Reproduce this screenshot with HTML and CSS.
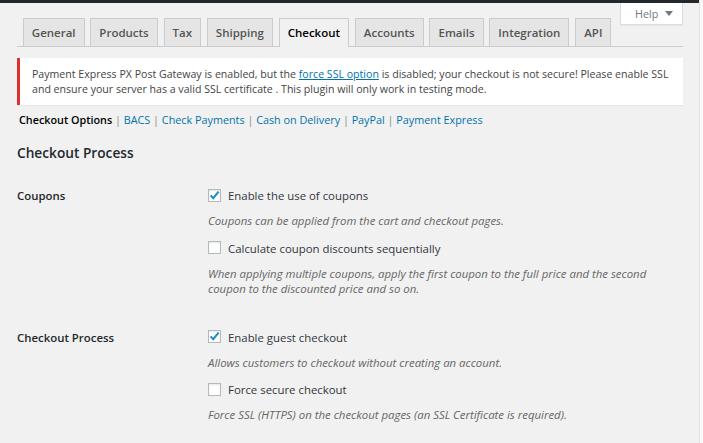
FILE: index.html
```html
<!DOCTYPE html>
<html lang="en">
<head>
<meta charset="utf-8">
<title>WooCommerce Settings - Checkout</title>
<link rel="stylesheet" href="styles.css">
</head>
<body>
<div class="page">
  <div class="main">
    <div class="adminbar"></div>
    <div class="help-tab">Help <svg class="help-arrow" width="8" height="5" viewBox="0 0 8 5"><path d="M0 0 H8 L4 5 Z" fill="#72777c"/></svg></div>
    <div class="wrap">
      <nav class="tabs">
        <a class="tab">General</a>
        <a class="tab">Products</a>
        <a class="tab">Tax</a>
        <a class="tab">Shipping</a>
        <a class="tab tab-active">Checkout</a>
        <a class="tab">Accounts</a>
        <a class="tab">Emails</a>
        <a class="tab">Integration</a>
        <a class="tab">API</a>
      </nav>
      <div class="notice">
        <p>Payment Express PX Post Gateway is enabled, but the <a class="link-u">force SSL option</a> is disabled; your checkout is not secure! Please enable SSL and ensure your server has a valid SSL certificate . This plugin will only work in testing mode.</p>
      </div>
      <ul class="subsub">
        <li><span class="current">Checkout Options</span> <span class="sep">|</span> </li>
        <li><a class="link">BACS</a> <span class="sep">|</span> </li>
        <li><a class="link">Check Payments</a> <span class="sep">|</span> </li>
        <li><a class="link">Cash on Delivery</a> <span class="sep">|</span> </li>
        <li><a class="link">PayPal</a> <span class="sep">|</span> </li>
        <li><a class="link">Payment Express</a></li>
      </ul>
      <h2 class="section-title">Checkout Process</h2>
      <div class="form-table">
        <div class="form-row">
          <div class="row-label">Coupons</div>
          <div class="row-field">
            <label class="option"><span class="cb"><svg width="13" height="13" viewBox="0 0 13 13"><path d="M2.6 6.4 L5.2 9.2 L10.6 2.6" fill="none" stroke="#1e8cbe" stroke-width="2"/></svg></span>Enable the use of coupons</label>
            <p class="desc">Coupons can be applied from the cart and checkout pages.</p>
            <label class="option"><span class="cb"></span>Calculate coupon discounts sequentially</label>
            <p class="desc">When applying multiple coupons, apply the first coupon to the full price and the second coupon to the discounted price and so on.</p>
          </div>
        </div>
        <div class="form-row">
          <div class="row-label">Checkout Process</div>
          <div class="row-field">
            <label class="option"><span class="cb"><svg width="13" height="13" viewBox="0 0 13 13"><path d="M2.6 6.4 L5.2 9.2 L10.6 2.6" fill="none" stroke="#1e8cbe" stroke-width="2"/></svg></span>Enable guest checkout</label>
            <p class="desc">Allows customers to checkout without creating an account.</p>
            <label class="option"><span class="cb"></span>Force secure checkout</label>
            <p class="desc">Force SSL (HTTPS) on the checkout pages (an SSL Certificate is required).</p>
          </div>
        </div>
      </div>
    </div>
  </div>
  <div class="gutter"></div>
</div>
</body>
</html>
```

FILE: styles.css
```css
* { box-sizing: border-box; }
html, body { margin: 0; padding: 0; }
body {
  background: #f1f1f1;
  font-family: "Open Sans", "Noto Sans", sans-serif;
  font-size: 10.6px;
  line-height: 16px;
  color: #444;
  height: 443px;
  overflow: hidden;
}
.page { display: flex; height: 443px; }
.main { width: 699px; position: relative; }
.gutter { flex: 1; background: #f8f8f8; border-left: 1px solid #e3e3e3; }
.adminbar { height: 3px; background: #23282d; }
.help-tab {
  position: absolute;
  top: 3px;
  right: 16px;
  height: 22px;
  width: 63px;
  padding: 0 0 0 14px;
  background: #fff;
  border: 1px solid #ddd;
  border-top: none;
  box-shadow: 0 1px 1px rgba(0,0,0,.04);
  color: #72777c;
  font-size: 10.8px;
  line-height: 21px;
  display: flex;
  align-items: center;
  gap: 7px;
}
.help-arrow { display: block; }
.wrap { margin: 0 16px 0 17px; }
.tabs {
  display: flex;
  padding: 15px 0 0 0;
  border-bottom: 1px solid #ccc;
}
.tab {
  margin-left: 5.8px;
  padding: 4px 8px;
  font-size: 11.5px;
  line-height: 19px;
  font-weight: 600;
  color: #555;
  background: #e5e5e5;
  border: 1px solid #ccc;
  border-bottom: none;
}
.tab-active {
  background: #f1f1f1;
  color: #000;
  margin-bottom: -1px;
  padding-bottom: 5px;
}
.notice {
  margin-top: 11px;
  background: #fff;
  border-left: 3px solid #dc3232;
  box-shadow: 0 1px 1px rgba(0,0,0,.04);
  padding: 9px 10px 8px 12px;
}
.notice p { margin: 0; line-height: 15px; color: #444; }
.link-u { color: #0073aa; text-decoration: underline; }
.link { color: #0073aa; }
.subsub {
  list-style: none;
  margin: 7px 0 0 2px;
  padding: 0;
  display: flex;
  white-space: pre;
  font-size: 10.8px;
}
.subsub li { display: block; }
.current { color: #000; font-weight: 600; }
.sep { color: #888; }
.section-title {
  margin: 16px 0 0 0;
  font-size: 13.7px;
  line-height: 18px;
  font-weight: 600;
  color: #23282d;
}
.form-table {
  margin-top: 26px;
  display: flex;
  flex-direction: column;
  gap: 33px;
  font-size: 11.4px;
}
.form-row { display: grid; grid-template-columns: 191px 1fr; }
.row-label { font-weight: 600; color: #23282d; line-height: 16px; }
.row-field { padding-right: 16px; }
.option { display: flex; align-items: center; color: #32373c; height: 16px; }
.cb {
  width: 13px;
  height: 13px;
  margin-right: 7px;
  background: #fff;
  border: 1px solid #b4b9be;
  box-shadow: inset 0 1px 2px rgba(0,0,0,.1);
  position: relative;
  flex: none;
  margin-top: -2px;
}
.cb svg { position: absolute; left: -1px; top: -1px; }
.desc {
  margin: 9px 0 12px 0;
  font-style: italic;
  color: #666;
  line-height: 15.6px;
}
.desc:last-child { margin-bottom: 0; }
```
